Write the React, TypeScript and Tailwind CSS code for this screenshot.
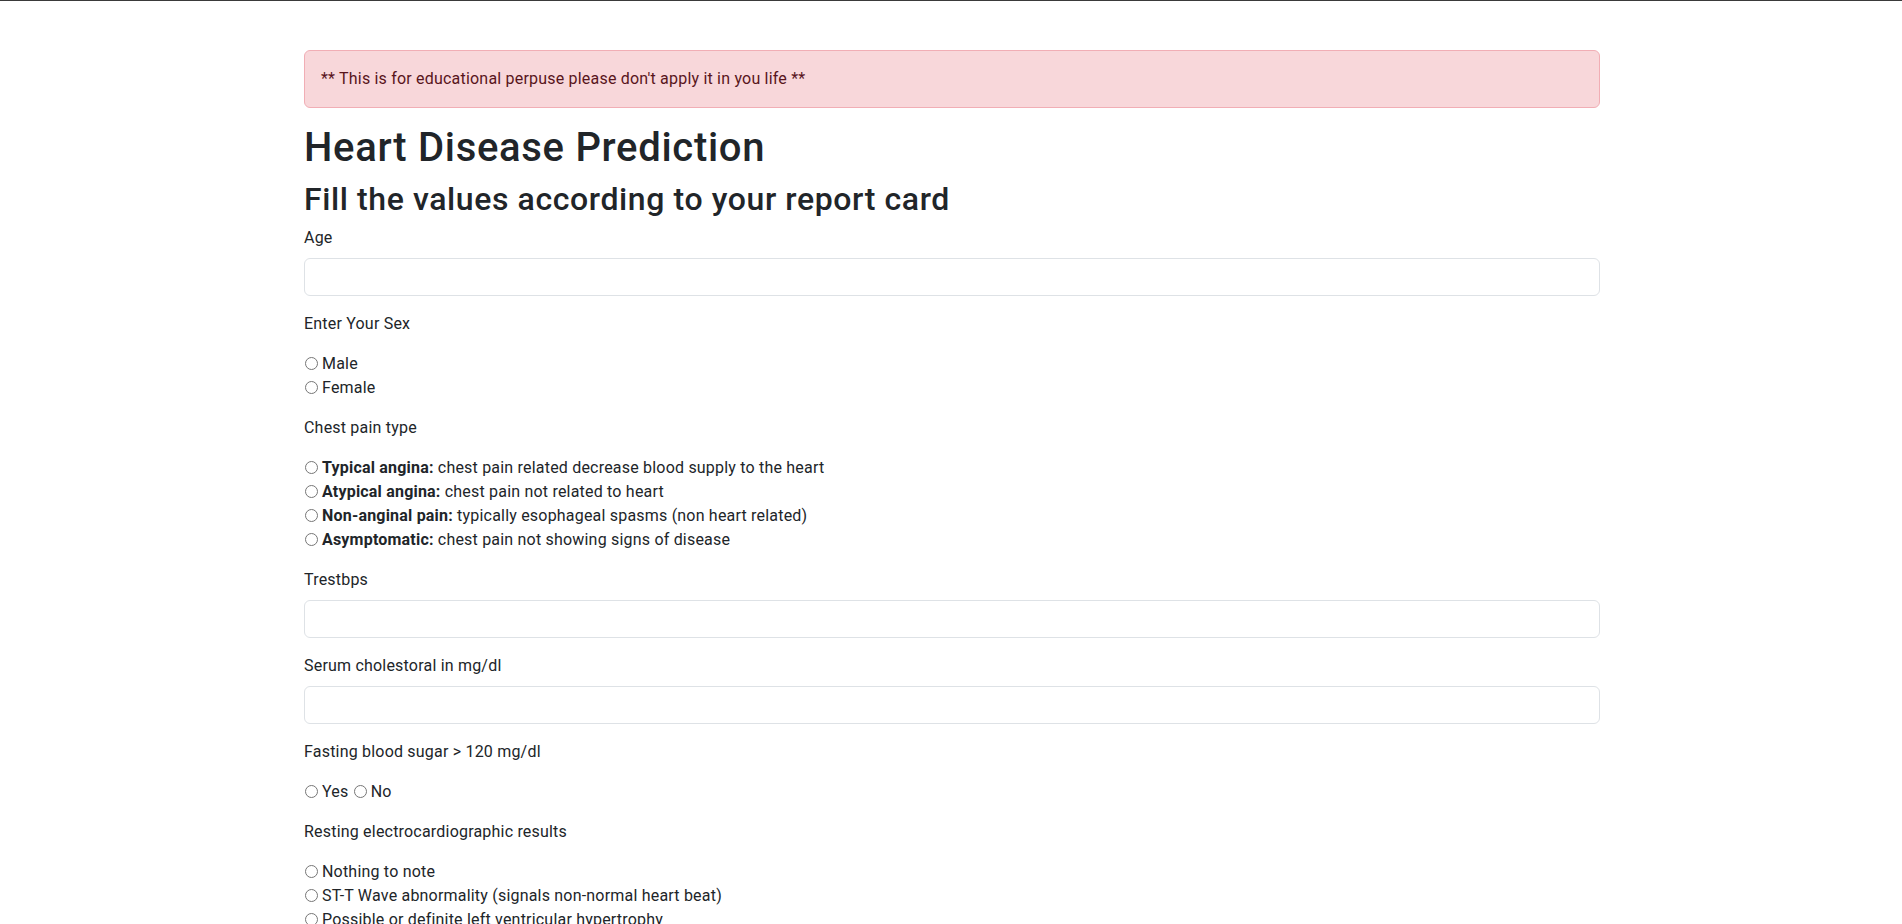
import React from "react";

type Option = { value: string; strong?: string; text: string };

const chestPain: Option[] = [
  { value: "0", strong: "Typical angina:", text: "chest pain related decrease blood supply to the heart" },
  { value: "1", strong: "Atypical angina:", text: "chest pain not related to heart" },
  { value: "2", strong: "Non-anginal pain:", text: "typically esophageal spasms (non heart related)" },
  { value: "3", strong: "Asymptomatic:", text: "chest pain not showing signs of disease" },
];

const restecg: Option[] = [
  { value: "0", text: "Nothing to note" },
  { value: "1", text: "ST-T Wave abnormality (signals non-normal heart beat)" },
  { value: "2", text: "Possible or definite left ventricular hypertrophy" },
];

function Radio({ name, value }: { name: string; value: string }) {
  return <input type="radio" name={name} value={value} className="m-0 ml-px mr-[4px] h-[13px] w-[13px] align-[-1px]" />;
}

function TextField({ label, name }: { label: string; name: string }) {
  return (
    <div className="mb-4">
      <label htmlFor={name} className="mb-2 block">
        {label}
      </label>
      <input
        id={name}
        name={name}
        type="text"
        className="block h-[38px] w-full rounded-md border border-[#dee2e6] bg-white px-3 py-1.5 outline-none"
      />
    </div>
  );
}

function RadioList({ name, options }: { name: string; options: Option[] }) {
  return (
    <div className="mb-4">
      {options.map((o) => (
        <div key={o.value}>
          <Radio name={name} value={o.value} />
          {o.strong ? (
            <>
              <b className="font-bold">{o.strong}</b> {o.text}
            </>
          ) : (
            o.text
          )}
        </div>
      ))}
    </div>
  );
}

export default function App() {
  return (
    <div className="min-h-screen bg-white text-base leading-6 tracking-[0.2px] text-[#212529] [font-family:Roboto,'Liberation_Sans',sans-serif]">
      <div className="h-px bg-[#3a3a3a]" />
      <div className="mx-auto mt-[49px] max-w-[1320px] pl-[13px] pr-[11px]">
        <div className="mb-4 rounded-md border border-[#f1aeb5] bg-[#f8d7da] p-4 text-[#58151c]">
          ** This is for educational perpuse please don't apply it in you life **
        </div>

        <h1 className="mb-2 text-[40px] font-medium leading-[1.2] tracking-[0.7px]">Heart Disease Prediction</h1>
        <h2 className="mb-2 text-[32px] font-medium leading-[1.2] tracking-[0.6px]">
          Fill the values according to your report card
        </h2>

        <form>
          <TextField label="Age" name="age" />

          <p className="mb-4">Enter Your Sex</p>
          <RadioList
            name="sex"
            options={[
              { value: "1", text: "Male" },
              { value: "0", text: "Female" },
            ]}
          />

          <p className="mb-4">Chest pain type</p>
          <RadioList name="cp" options={chestPain} />

          <TextField label="Trestbps" name="trestbps" />
          <TextField label="Serum cholestoral in mg/dl" name="chol" />

          <p className="mb-4">Fasting blood sugar &gt; 120 mg/dl</p>
          <div className="mb-4">
            <Radio name="fbs" value="1" />
            Yes <Radio name="fbs" value="0" />
            No
          </div>

          <p className="mb-4">Resting electrocardiographic results</p>
          <RadioList name="restecg" options={restecg} />
        </form>
      </div>
    </div>
  );
}
